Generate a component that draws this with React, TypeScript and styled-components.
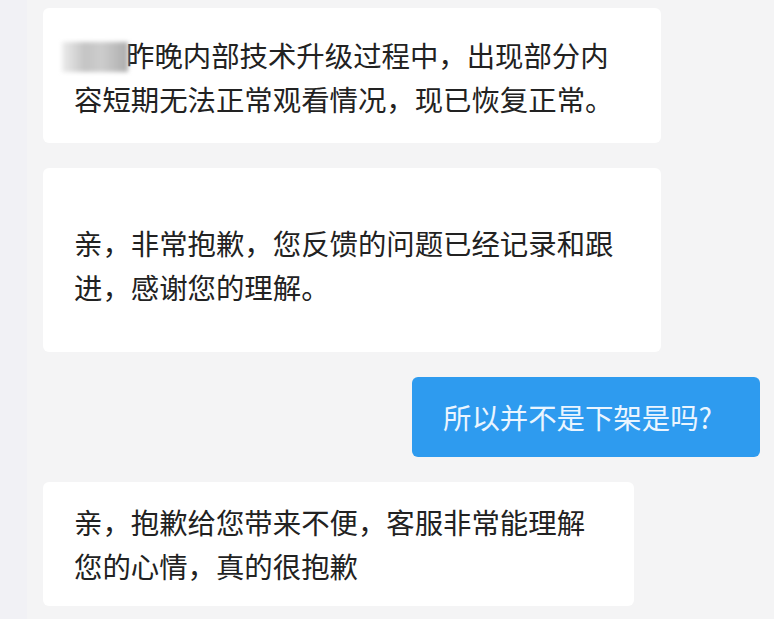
import * as React from 'react';
import styled, { createGlobalStyle } from 'styled-components';

const FONT = '"Noto Sans CJK SC", "Noto Sans", sans-serif';

const GlobalStyle = createGlobalStyle`
  html, body {
    margin: 0;
    padding: 0;
    background: #f4f4f5;
  }
  body {
    font-family: ${FONT};
  }
`;

interface BubbleProps {
  width: number;
  padTop: number;
  padBottom: number;
}

const Chat = styled.div`
  width: 774px;
  height: 619px;
  box-sizing: border-box;
  padding: 8px 14px 0 43px;
  display: flex;
  flex-direction: column;
  gap: 25px;
  overflow: hidden;
  background: linear-gradient(90deg, #f1f1f5 0, #f1f1f5 27px, #f4f4f5 27px);
`;

const Bubble = styled.div<BubbleProps>`
  width: ${(p) => p.width}px;
  box-sizing: border-box;
  padding: ${(p) => `${p.padTop}px 0 ${p.padBottom}px 31px`};
  background: #ffffff;
  border-radius: 6px;
  color: #222222;
  font-size: 28.4px;
  line-height: 44px;
`;

const Mine = styled.div`
  align-self: flex-end;
  width: 348px;
  height: 80px;
  box-sizing: border-box;
  padding-left: 31px;
  display: flex;
  align-items: center;
  background: #2e9bef;
  border-radius: 6px;
  color: #eaf5ff;
  font-size: 28.4px;
  line-height: 44px;
`;

const Line = styled.div`
  white-space: nowrap;
`;

const Blurred = styled.span`
  display: inline-block;
  width: 66px;
  height: 30px;
  margin-left: -12px;
  margin-right: -2px;
  vertical-align: -5px;
  background: linear-gradient(90deg, #ececec 0%, #c4c4c4 35%, #cdcdcd 60%, #adadad 100%);
  filter: blur(2px);
`;

const App = () => (
  <>
    <GlobalStyle />
    <Chat>
      <Bubble width={618} padTop={25} padBottom={22}>
        <Line>
          <Blurred />
          昨晚内部技术升级过程中，出现部分内
        </Line>
        <Line>容短期无法正常观看情况，现已恢复正常。</Line>
      </Bubble>
      <Bubble width={618} padTop={53} padBottom={43}>
        <Line>亲，非常抱歉，您反馈的问题已经记录和跟</Line>
        <Line>进，感谢您的理解。</Line>
      </Bubble>
      <Mine>所以并不是下架是吗?</Mine>
      <Bubble width={591} padTop={18} padBottom={18}>
        <Line>亲，抱歉给您带来不便，客服非常能理解</Line>
        <Line>您的心情，真的很抱歉</Line>
      </Bubble>
    </Chat>
  </>
);

export default App;
